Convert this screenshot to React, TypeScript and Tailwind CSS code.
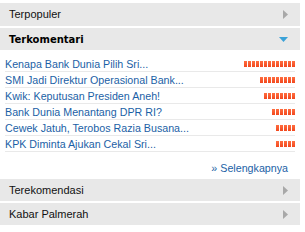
import React from "react";

const items: { title: string; n: number }[] = [
  { title: "Kenapa Bank Dunia Pilih Sri...", n: 13 },
  { title: "SMI Jadi Direktur Operasional Bank...", n: 9 },
  { title: "Kwik: Keputusan Presiden Aneh!", n: 8 },
  { title: "Bank Dunia Menantang DPR RI?", n: 6 },
  { title: "Cewek Jatuh, Terobos Razia Busana...", n: 5 },
  { title: "KPK Diminta Ajukan Cekal Sri...", n: 5 },
];

function RightTri() {
  return (
    <svg width="5" height="9" viewBox="0 0 5 9" className="block">
      <path d="M0 0 L5 4.5 L0 9 Z" fill="#a8a8a8" />
    </svg>
  );
}

function DownTri() {
  return (
    <svg width="9" height="5" viewBox="0 0 9 5" className="block">
      <path d="M0 0 L9 0 L4.5 5 Z" fill="#3aa2d8" />
    </svg>
  );
}

function Header({ label, bold, open, h }: { label: string; bold?: boolean; open?: boolean; h: string }) {
  return (
    <div className={`flex items-center justify-between bg-[#e8e8e8] pl-[9px] pr-[12px] ${h}`}>
      <span
        className={
          bold
            ? "text-[10px] font-bold text-black font-['DejaVu_Sans',sans-serif]"
            : "text-[11px] text-[#111] font-['Liberation_Sans',Arial,sans-serif]"
        }
      >
        {label}
      </span>
      {open ? <DownTri /> : <RightTri />}
    </div>
  );
}

export default function App() {
  return (
    <div className="w-[305px] h-[232px] bg-white overflow-hidden">
      <div className="w-[300px] pt-[3px] flex flex-col">
        <Header label="Terpopuler" h="h-[23px]" />
        <div className="h-[2px]" />
        <Header label="Terkomentari" bold open h="h-[22px]" />
        <div className="h-[129px] px-[5px] pt-[6px] flex flex-col font-['Liberation_Sans',Arial,sans-serif]">
          {items.map((it) => (
            <div
              key={it.title}
              className="h-[16px] border-b border-[#e9e9e9] flex items-center justify-between"
            >
              <span className="text-[10.7px] leading-[14px] text-[#1b5fa6] whitespace-nowrap">{it.title}</span>
              <span className="flex gap-px">
                {Array.from({ length: it.n }).map((_, i) => (
                  <span key={i} className="block w-[3px] h-[6px] bg-gradient-to-b from-[#ff6d3f] to-[#f2471c]" />
                ))}
              </span>
            </div>
          ))}
          <div className="flex justify-end pt-[9px] pr-[7px]">
            <span className="text-[10.7px] leading-[14px] text-[#1b5fa6]">» Selengkapnya</span>
          </div>
        </div>
        <Header label="Terekomendasi" h="h-[22px]" />
        <div className="h-[2px]" />
        <Header label="Kabar Palmerah" h="h-[22px]" />
      </div>
    </div>
  );
}
